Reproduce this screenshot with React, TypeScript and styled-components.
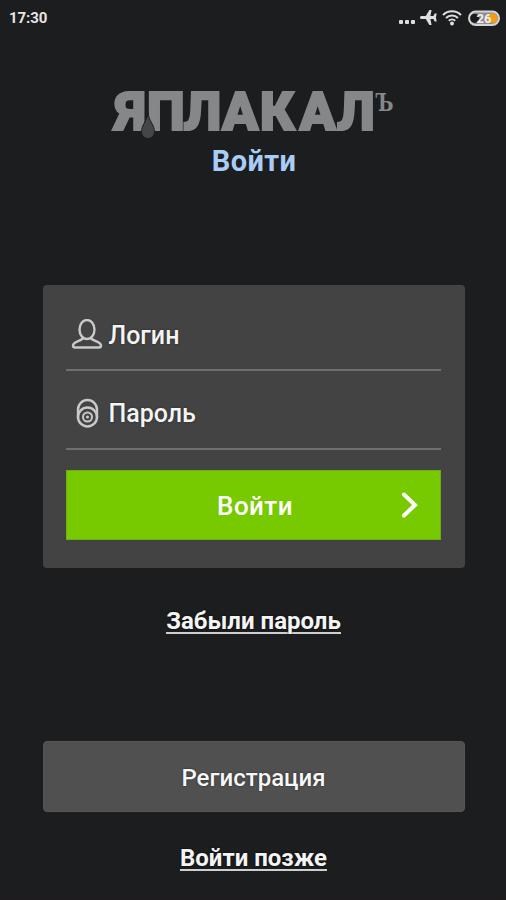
import React from "react";
import styled, { createGlobalStyle } from "styled-components";

const GlobalStyle = createGlobalStyle`
  * { box-sizing: border-box; }
  body {
    margin: 0;
    background: #1c1d1f;
    font-family: Roboto, "Noto Sans", sans-serif;
    color: #f4f4f4;
  }
`;

const Screen = styled.main`
  display: flex;
  flex-direction: column;
  align-items: center;
  height: 900px;
  overflow: hidden;
  background: #1c1d1f;
  border-bottom: 1px solid #24161b;
`;

const StatusBar = styled.div`
  align-self: stretch;
  display: flex;
  flex: none;
  justify-content: space-between;
  align-items: center;
  height: 35px;
  padding: 0 6px 0 9px;
`;

const Clock = styled.span`
  font-size: 15px;
  font-weight: 700;
  line-height: 18px;
  letter-spacing: -0.1px;
  color: #e6e6e6;
`;

const StatusIcons = styled.svg`
  display: block;
  width: 102px;
  height: 24px;
`;

const Logo = styled.svg`
  display: block;
  flex: none;
  width: 290px;
  height: 70px;
  margin-top: 41px;
`;

const Title = styled.h1`
  flex: none;
  margin: -2px 0 0 2px;
  font-size: 29px;
  font-weight: 700;
  line-height: 34px;
  letter-spacing: 0.4px;
  color: #a9cdf6;
`;

const Card = styled.form`
  display: flex;
  flex: none;
  flex-direction: column;
  width: 422px;
  height: 283px;
  margin: 107px 0 0 1px;
  padding: 15px 24px 28px 23px;
  border-radius: 4px;
  background: #434343;
`;

const Field = styled.label<{ $height: number; $top?: number }>`
  display: flex;
  flex: none;
  align-items: center;
  height: ${(p) => p.$height}px;
  padding: ${(p) => p.$top ?? 0}px 0 0 5px;
  border-bottom: 2px solid #6f6f6f;
`;

const FieldIcon = styled.svg`
  flex: none;
  width: 32px;
  height: 32px;
  margin-right: 6px;
  fill: none;
  stroke: #c9c9c9;
  stroke-width: 2.4;
`;

const FieldText = styled.span`
  font-size: 25px;
  font-weight: 500;
  line-height: 30px;
  padding-top: 1px;
  text-shadow: 0 0 2px #222;
`;

const SubmitButton = styled.button`
  display: grid;
  grid-template-columns: 60px 1fr 60px;
  align-items: center;
  height: 70px;
  margin-top: 20px;
  padding: 0;
  border: 1px solid #6fae10;
  background: #77c900;
  color: #fff;
  font: 500 26px/32px Roboto, sans-serif;
  letter-spacing: 0.4px;

  span {
    grid-column: 2;
    padding: 2px 0 0 4px;
  }
`;

const Chevron = styled.svg`
  width: 24px;
  height: 32px;
  margin-left: 18px;
  fill: none;
  stroke: #fff;
  stroke-width: 4;
  stroke-linecap: round;
  stroke-linejoin: miter;
`;

const TextLink = styled.a<{ $top: number }>`
  flex: none;
  margin: ${(p) => p.$top}px 0 0 1px;
  height: 28px;
  border-bottom: 2px solid #cfcfcf;
  font-size: 24px;
  font-weight: 700;
  line-height: 30px;
  text-shadow: 0 0 2px #000;
`;

const RegisterButton = styled.button`
  flex: none;
  width: 422px;
  height: 71px;
  margin: 107px 0 0 1px;
  padding: 3px 0 0;
  border: 1px solid #555;
  border-radius: 4px;
  background: #505050;
  color: #f7f7f7;
  font: 500 24px/30px Roboto, sans-serif;
  text-shadow: 0 0 2px #222;
`;

export default function App() {
  return (
    <>
      <GlobalStyle />
      <Screen>
        <StatusBar>
          <Clock>17:30</Clock>
          <StatusIcons viewBox="398 5 102 24">
            <g fill="#dedede">
              <rect x="399" y="19" width="4" height="4" rx="1" />
              <rect x="405" y="19" width="4" height="4" rx="1" />
              <rect x="411" y="19" width="4" height="4" rx="1" />
              <path d="M420 16.500c0-1 .8-1.500 1.600-1.500h4.200l3.600-6h2.200l-1.200 6h3l1.300-2.500h2l-.8 4 .8 4h-2l-1.300-2.500h-3l1.200 6h-2.200l-3.600-6h-4.200c-.8 0-1.600-.5-1.600-1.500z" />
              <circle cx="452" cy="22.500" r="2" />
            </g>
            <g fill="none" stroke="#dedede" strokeWidth="2">
              <path d="M443 14a12.700 12.700 0 0 1 18 0" />
              <path d="M446 17a8.500 8.500 0 0 1 12 0" />
              <path d="M448.800 19.800a4.600 4.600 0 0 1 6.400 0" />
            </g>
            <rect x="469" y="10.500" width="30" height="13.500" rx="6.700" fill="#8e8e8e" stroke="#d4d4d4" strokeWidth="2" />
            <circle cx="474.800" cy="17.300" r="4.600" fill="#191a1b" />
            <circle cx="492.500" cy="17.300" r="5" fill="#f59b18" />
            <text x="476.500" y="21.800" fontSize="13" fontWeight="700" fill="#f0f0f0">26</text>
          </StatusIcons>
        </StatusBar>

        <Logo viewBox="108 76 290 70" role="img">
          <g fill="#868788" stroke="#868788" strokeLinejoin="miter">
            <text
              x="115 147 183.500 222 260 299.500 337"
              y="129.700"
              fontFamily="Roboto, sans-serif"
              fontSize="53.500"
              fontWeight="900"
              strokeWidth="2"
            >
              ЯПЛАКАЛ
            </text>
            <text
              x="375.500"
              y="110.500"
              fontFamily="'DejaVu Serif', serif"
              fontSize="25"
              fontWeight="700"
              textLength="18"
              lengthAdjust="spacingAndGlyphs"
              stroke="none"
            >
              Ъ
            </text>
          </g>
          <path
            d="M148 113c1 8 6.500 12 6.500 19a6.500 6.500 0 0 1-13 0c0-7 5.500-11 6.500-19z"
            fill="#454648"
            stroke="#1c1d1f"
          />
        </Logo>
        <Title>Войти</Title>

        <Card onSubmit={(e) => e.preventDefault()}>
          <Field $height={71} $top={1}>
            <FieldIcon viewBox="0 0 32 32">
              <ellipse cx="16" cy="10.500" rx="7.500" ry="9.500" />
              <path d="M12 19c-1 3-9.500 3-10 7.500 0 1.500.8 2 2 2h24c1.200 0 2-.5 2-2-.5-4.500-9-4.500-10-7.500" />
            </FieldIcon>
            <FieldText>Логин</FieldText>
          </Field>
          <Field $height={79} $top={8}>
            <FieldIcon viewBox="0 0 32 32">
              <path d="M7 20v-8.500a9.500 9.500 0 0 1 19 0V20" />
              <circle cx="16.500" cy="19" r="9.500" />
              <circle cx="16.500" cy="19" r="4.500" strokeWidth="2" />
              <circle cx="16.500" cy="19" r="0.800" strokeWidth="1.500" />
            </FieldIcon>
            <FieldText>Пароль</FieldText>
          </Field>
          <SubmitButton type="submit">
            <span>Войти</span>
            <Chevron viewBox="0 0 24 32">
              <path d="M6 5.500L17 16 6 26.500" />
            </Chevron>
          </SubmitButton>
        </Card>

        <TextLink $top={38}>Забыли пароль</TextLink>
        <RegisterButton type="button">Регистрация</RegisterButton>
        <TextLink $top={31}>Войти позже</TextLink>
      </Screen>
    </>
  );
}
